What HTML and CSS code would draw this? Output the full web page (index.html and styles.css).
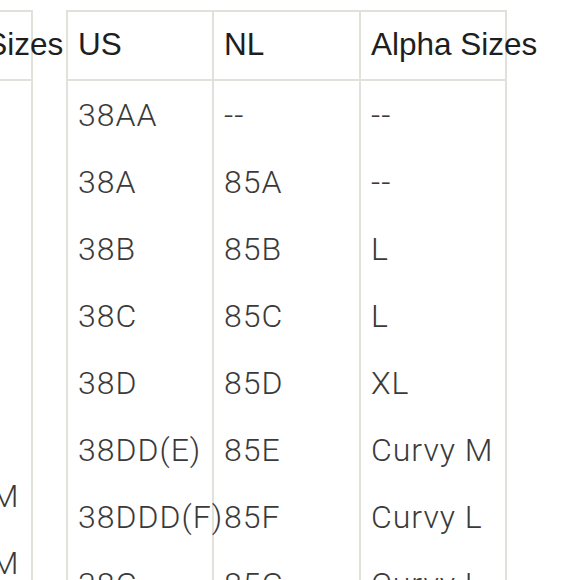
FILE: index.html
```html
<!DOCTYPE html>
<html lang="en">
<head>
<meta charset="utf-8">
<title>Size chart</title>
<link rel="stylesheet" href="styles.css">
</head>
<body>
<div class="page">
  <div class="size-tables">
    <table class="size-table">
      <colgroup><col class="col-a"><col class="col-b"><col class="col-c"></colgroup>
      <thead>
        <tr><th>US</th><th>NL</th><th>Alpha Sizes</th></tr>
      </thead>
      <tbody>
        <tr><td>36AA</td><td>--</td><td>--</td></tr>
        <tr><td>36A</td><td>80A</td><td>--</td></tr>
        <tr class="row-tall"><td>36B</td><td>80B</td><td>M</td></tr>
        <tr><td>36C</td><td>80C</td><td>M</td></tr>
        <tr><td>36D</td><td>80D</td><td>L</td></tr>
        <tr><td>36DD(E)</td><td>80E</td><td>Curvy M</td></tr>
        <tr><td>36DDD(F)</td><td>80F</td><td>Curvy M</td></tr>
        <tr><td>36G</td><td>80G</td><td>Curvy L</td></tr>
      </tbody>
    </table>
    <table class="size-table">
      <colgroup><col class="col-a"><col class="col-b"><col class="col-c"></colgroup>
      <thead>
        <tr><th>US</th><th>NL</th><th>Alpha Sizes</th></tr>
      </thead>
      <tbody>
        <tr><td>38AA</td><td>--</td><td>--</td></tr>
        <tr><td>38A</td><td>85A</td><td>--</td></tr>
        <tr><td>38B</td><td>85B</td><td>L</td></tr>
        <tr><td>38C</td><td>85C</td><td>L</td></tr>
        <tr><td>38D</td><td>85D</td><td>XL</td></tr>
        <tr><td>38DD(E)</td><td>85E</td><td>Curvy M</td></tr>
        <tr><td>38DDD(F)</td><td>85F</td><td>Curvy L</td></tr>
        <tr><td>38G</td><td>85G</td><td>Curvy L</td></tr>
      </tbody>
    </table>
  </div>
</div>
</body>
</html>
```
FILE: styles.css
```css
html, body {
  margin: 0;
  padding: 0;
  background: #ffffff;
}

.page {
  width: 580px;
  height: 580px;
  overflow: hidden;
}

.size-tables {
  display: flex;
  align-items: flex-start;
  gap: 33px;
  margin-left: -408px;
  padding-top: 10px;
}

.size-table {
  flex: none;
  width: 441px;
  table-layout: fixed;
  border-collapse: separate;
  border-spacing: 0;
  border-top: 2px solid #e2e0db;
  border-right: 2px solid #e2e0db;
}

.col-a { width: 146px; }
.col-b { width: 147px; }
.col-c { width: 146px; }

.size-table th,
.size-table td {
  box-sizing: border-box;
  border-left: 2px solid #e2e0db;
  padding: 0 0 0 10px;
  text-align: left;
  vertical-align: middle;
  white-space: nowrap;
}

.size-table th {
  height: 69px;
  padding-bottom: 3px;
  border-bottom: 2px solid #e2e0db;
  font-family: "Liberation Sans", Arial, sans-serif;
  font-size: 31.5px;
  font-weight: 400;
  color: #1e1e1e;
}

.size-table td {
  height: 67px;
  font-family: Roboto, "Liberation Sans", sans-serif;
  font-size: 32px;
  font-weight: 300;
  letter-spacing: 1px;
  color: #3a3a3a;
}

.size-table .row-tall td {
  height: 113px;
}
```
